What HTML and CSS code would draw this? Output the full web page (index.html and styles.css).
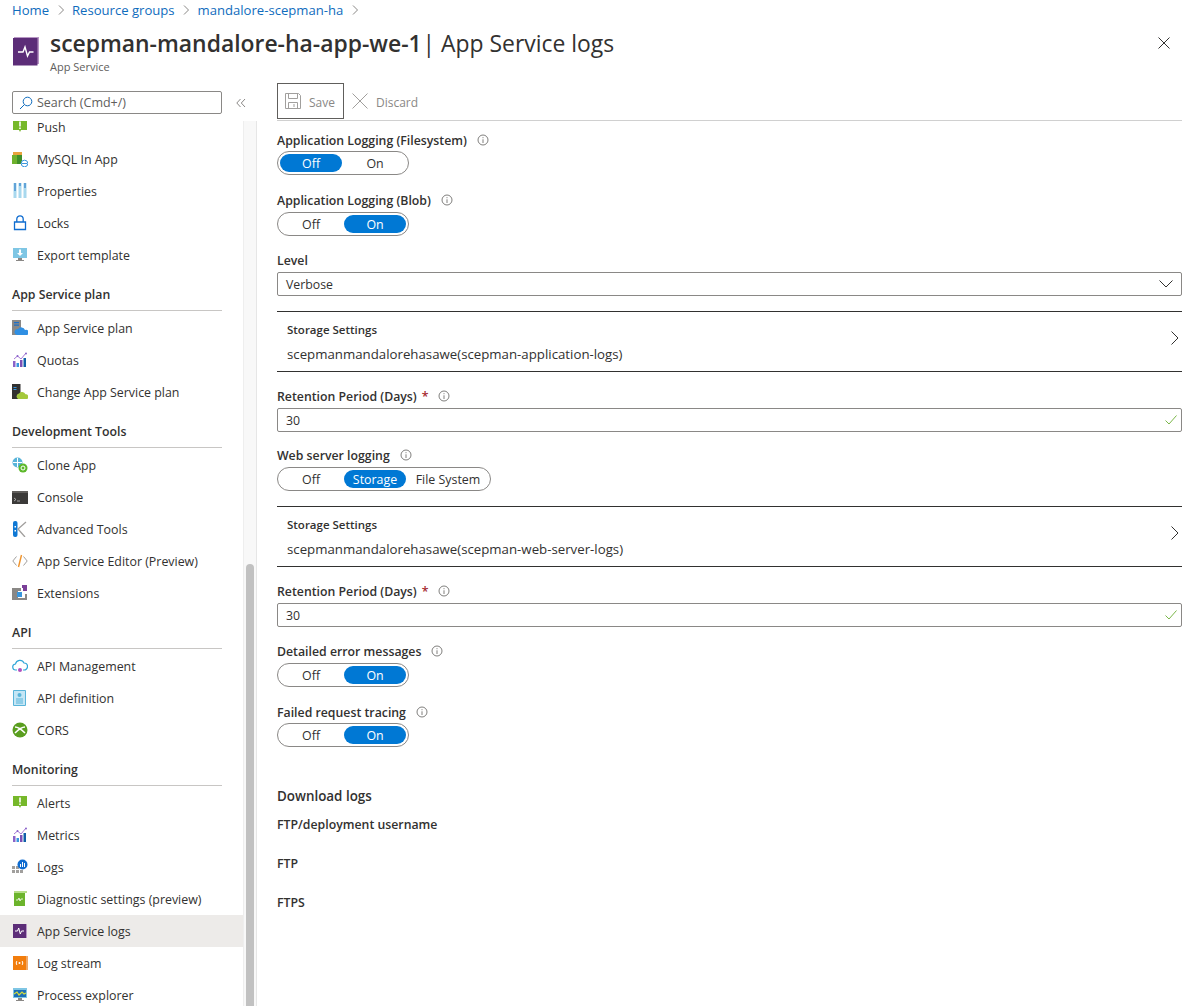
FILE: index.html
```html
<!DOCTYPE html>
<html lang="en">
<head>
<meta charset="utf-8">
<title>App Service logs</title>
<link rel="stylesheet" href="styles.css">
</head>
<body>
<nav class="crumbs"><a>Home</a><svg class="sep" viewBox="0 0 8 12"><path d="M2 1.500 6.500 6 2 10.500"/></svg><a>Resource groups</a><svg class="sep" viewBox="0 0 8 12"><path d="M2 1.500 6.500 6 2 10.500"/></svg><a>mandalore-scepman-ha</a><svg class="sep" viewBox="0 0 8 12"><path d="M2 1.500 6.500 6 2 10.500"/></svg></nav>
<header class="head">
  <svg class="head-icon" viewBox="0 0 26 29"><path fill="#b796c4" d="M1 0h25v27H1z"/><path fill="#5c2d78" d="M0 1h24.500v27.500H0z"/><path fill="none" stroke="#fff" stroke-width="1.400" d="M5 15h5l2-5 2.500 9 2-4h4"/></svg>
  <div class="head-text">
    <h1><b>scepman-mandalore-ha-app-we-1</b> | App Service logs</h1>
    <p>App Service</p>
  </div>
  <svg class="close" viewBox="0 0 12 12"><path d="M.5.500l11 11M11.500.500l-11 11"/></svg>
</header>
<div class="body-row">
  <aside class="side">
    <div class="side-top">
      <div class="search"><svg viewBox="0 0 14 14"><circle cx="8.500" cy="5.500" r="4.300"/><path d="M5.500 8.500 1 13"/></svg><span>Search (Cmd+/)</span></div>
      <svg class="collapse" viewBox="0 0 10 10"><path d="M4.500 1 .8 5l3.700 4M9 1 5.300 5 9 9"/></svg>
    </div>
    <div class="side-scroll">
      <div class="menu-wrap">
        <ul class="menu">
          <li><svg viewBox="0 0 16 16"><path fill="#76b82a" d="M1 1h14v10H9l-1 2-1-2H1z"/><path fill="#fff" d="M7.200 2.500h1.600v5H7.200zM7.200 8.500h1.600V10H7.200z"/></svg>Push</li>
          <li><svg viewBox="0 0 16 16"><path fill="#e8a33d" d="M1 1h9v4H1z"/><path fill="#6eb12d" d="M0 4h5v9H0z"/><path fill="#3f8f2a" d="M5 4h5v9H5z"/><circle cx="12.500" cy="12.500" r="3.300" fill="#fff" stroke="#3a96dd"/><path stroke="#3a96dd" d="M10 12.500h5"/></svg>MySQL In App</li>
          <li><svg viewBox="0 0 16 16"><path fill="#a8d8ee" d="M1.500 0h3v15h-3zM6.500 0h3v15h-3zM11.500 0h3v15h-3z"/><path fill="#1b6ec2" d="M2.500 0h1v8h-1zM7.500 0h1v3h-1zM12.500 0h1v5h-1z"/></svg>Properties</li>
          <li><svg viewBox="0 0 16 16"><path fill="none" stroke="#0f6cd0" stroke-width="1.300" d="M2.500 7h11v7.500h-11zM4.800 7V4a3.200 3.200 0 0 1 6.400 0v3"/></svg>Locks</li>
          <li><svg viewBox="0 0 16 16"><path fill="#7fc6e4" d="M1 1h14v10H1z"/><path fill="#8a8886" d="M6 11h4v2H6zM4 13h8v1H4z"/><path fill="#fff" d="M7 2.500h2V6h2L8 9 5 6h2z"/></svg>Export template</li>
        </ul>
        <h2 class="sec">App Service plan</h2>
        <ul class="menu">
          <li><svg viewBox="0 0 16 16"><path fill="#8a8886" d="M0 0h9v15H0z"/><path fill="#1d6fc8" d="M2 2h5v1.200H2zM2 4.500h5v1.200H2z"/><path fill="#2f8fe3" d="M5 15a3 3 0 0 1 1-6 4 4 0 0 1 7 1 2.600 2.600 0 0 1 2 5z"/></svg>App Service plan</li>
          <li><svg viewBox="0 0 16 16"><path fill="#8a63c9" d="M1 9h2.500v6H1z"/><path fill="#3a96dd" d="M4.500 11H7v4H4.500z"/><path fill="#7b4fb5" d="M8 8h2.500v7H8z"/><path fill="#0f5fa8" d="M11.500 6H14v9h-2.500z"/><path fill="none" stroke="#a678d8" d="m2 7 3.500-3 3.500 3 5-6"/><circle cx="5.500" cy="4" r="1" fill="#8a63c9"/><circle cx="14" cy="1.500" r="1" fill="#8a63c9"/></svg>Quotas</li>
          <li><svg viewBox="0 0 16 16"><path fill="#323130" d="M0 0h8.500v15H0z"/><path fill="#3a96dd" d="M1.500 3h3v1h-3zM1.500 5h3v1h-3z"/><path fill="#a4c83c" d="M6 15a3 3 0 0 1 1-5.500 3.800 3.800 0 0 1 6.500.800A2.500 2.500 0 0 1 15 15z"/></svg>Change App Service plan</li>
        </ul>
        <h2 class="sec">Development Tools</h2>
        <ul class="menu">
          <li><svg viewBox="0 0 16 16"><circle cx="5.500" cy="5.500" r="5" fill="#59b4d9"/><path stroke="#fff" fill="none" d="M1 5.500h9M5.500 1v9"/><circle cx="11" cy="11" r="4.500" fill="#5cb82a"/><circle cx="11" cy="11" r="2" fill="none" stroke="#fff"/></svg>Clone App</li>
          <li><svg viewBox="0 0 16 16"><path fill="#3b3a39" d="M0 2h16v13H0z"/><path fill="#605e5c" d="M0 2h16v2H0z"/><path fill="none" stroke="#d0d0d0" stroke-width=".7" d="m2 9 2 1.500L2 12M5 12h3"/></svg>Console</li>
          <li><svg viewBox="0 0 16 16"><rect x="1" width="4.500" height="16" rx="2" fill="#0f78d4"/><path fill="#fff" d="M2.500 5h1.500v1.500H2.500zM2.500 9h1.500v1.500H2.500z"/><path fill="none" stroke="#a19f9d" stroke-width="1.300" d="M14 1 6 8l7 8"/></svg>Advanced Tools</li>
          <li><svg viewBox="0 0 16 16"><path fill="none" stroke="#a19f9d" d="M4.500 3.500 .8 8l3.700 4.500M11.500 3.500 15.200 8l-3.700 4.500"/><path fill="none" stroke="#f0932b" stroke-width="1.400" d="M9.500 2 6.500 14"/></svg>App Service Editor (Preview)</li>
          <li><svg viewBox="0 0 16 16"><path fill="#8a8886" d="M0 3h9v3H6v7h7V9h2v6H0z"/><path fill="#3a96dd" d="M5 7h5v5H5z"/><path fill="#7b3f98" d="M10 0h5v6h-4V3h-1z"/></svg>Extensions</li>
        </ul>
        <h2 class="sec">API</h2>
        <ul class="menu">
          <li><svg viewBox="0 0 16 16"><path fill="none" stroke="#2fa6d8" stroke-width="1.200" d="M5 12H4a3 3 0 0 1-.500-6 4.500 4.500 0 0 1 8.500-1 3.500 3.500 0 0 1 0 7h-1"/><circle cx="8" cy="12" r="2" fill="#b04fbf"/></svg>API Management</li>
          <li><svg viewBox="0 0 16 16"><path fill="#c5e6f5" stroke="#59b4d9" d="M1.500.500h12v15h-12z"/><path stroke="#59b4d9" d="M4 9h7M4 11h7M4 13h7"/><circle cx="7.500" cy="5" r="2" fill="#59b4d9"/></svg>API definition</li>
          <li><svg viewBox="0 0 16 16"><circle cx="8" cy="8" r="7.500" fill="#5a9e1f"/><path fill="none" stroke="#fff" stroke-width="1.600" d="M3 5c3 0 6 2 10 6M13 5c-3 0-6 2-10 6"/></svg>CORS</li>
        </ul>
        <h2 class="sec">Monitoring</h2>
        <ul class="menu">
          <li><svg viewBox="0 0 16 16"><path fill="#76b82a" d="M1 1h14v10H9l-1 2-1-2H1z"/><path fill="#fff" d="M7.200 2.500h1.600v5H7.200zM7.200 8.500h1.600V10H7.200z"/></svg>Alerts</li>
          <li><svg viewBox="0 0 16 16"><path fill="#8a63c9" d="M1 9h2.500v6H1z"/><path fill="#3a96dd" d="M4.500 11H7v4H4.500z"/><path fill="#7b4fb5" d="M8 8h2.500v7H8z"/><path fill="#0f5fa8" d="M11.500 6H14v9h-2.500z"/><path fill="none" stroke="#a678d8" d="m2 7 3.500-3 3.500 3 5-6"/><circle cx="5.500" cy="4" r="1" fill="#8a63c9"/><circle cx="14" cy="1.500" r="1" fill="#8a63c9"/></svg>Metrics</li>
          <li><svg viewBox="0 0 16 16"><path fill="#a19f9d" d="M0 7h3v3H0zM4 7h3v3H4zM0 11h3v3H0zM4 11h3v3H4zM8 11h3v3H8z"/><circle cx="10.500" cy="5.500" r="5" fill="#0f6cd0"/><path fill="#fff" d="M8 5h1v3H8zM10 3h1v5h-1zM12 4h1v4h-1z"/></svg>Logs</li>
          <li><svg viewBox="0 0 16 16"><path fill="#b7dd8a" d="M2 0h13v2H2z"/><path fill="#6cb42c" d="M2 2h11v13H2z"/><path fill="none" stroke="#fff" stroke-width=".8" d="M4 9h2l1-2 1 3 1-2h2"/></svg>Diagnostic settings (preview)</li>
          <li class="active"><svg viewBox="0 0 16 16"><path fill="#b796c4" d="M1 1h14v14H1z"/><path fill="#5c2d78" d="M1 1h13v14H1z"/><path fill="none" stroke="#fff" d="M3 8h2.500l1.200-3 1.600 6 1.200-3H12"/></svg>App Service logs</li>
          <li><svg viewBox="0 0 16 16"><path fill="#f0a868" d="M2 1h14v14H2z"/><path fill="#f27d0c" d="M1 1h13v14H1z"/><circle cx="7.500" cy="8" r="1" fill="#fff"/><path fill="none" stroke="#fff" d="M5 6c-1 1-1 3 0 4M10 6c1 1 1 3 0 4"/></svg>Log stream</li>
          <li><svg viewBox="0 0 16 16"><path fill="#7fc6e4" d="M1 1h14v10H1z"/><path fill="#1c6fb8" d="M2 3h12v7H2z"/><path fill="#8a8886" d="M6 11h4v2H6zM4 13h8v1H4z"/><path fill="none" stroke="#d4dc3c" stroke-width="1.200" d="m2 7 3-2 2 3 3-3 2 2 2-1"/></svg>Process explorer</li>
        </ul>
      </div>
      <div class="track"><div class="thumb"></div></div>
    </div>
  </aside>
  <main class="main">
    <div class="toolbar">
      <button class="tool boxed"><svg viewBox="0 0 16 16"><path fill="none" stroke="#a19f9d" d="M.5.500h13l2 2v13H.500zM3.500.500v5h9v-5M3.500 15.500v-6h9v6M9 11v3"/></svg>Save</button>
      <button class="tool"><svg viewBox="0 0 16 16"><path fill="none" stroke="#a19f9d" d="m.5.500 15 15M15.500.500l-15 15"/></svg>Discard</button>
    </div>
    <form class="form">
      <div class="field mt-10">
        <div class="label">Application Logging (Filesystem)<svg class="info" viewBox="0 0 12 12"><circle cx="6" cy="6" r="5"/><path d="M6 5.300V9M6 3.200v1"/></svg></div>
        <div class="toggle tight"><span class="seg on">Off</span><span class="seg">On</span></div>
      </div>
      <div class="field mt-16">
        <div class="label">Application Logging (Blob)<svg class="info" viewBox="0 0 12 12"><circle cx="6" cy="6" r="5"/><path d="M6 5.300V9M6 3.200v1"/></svg></div>
        <div class="toggle"><span class="seg">Off</span><span class="seg on">On</span></div>
      </div>
      <div class="field mt-15">
        <div class="label">Level</div>
        <div class="box">Verbose<svg class="chev" viewBox="0 0 14 8"><path d="m.5.500 6.500 6.500 6.500-6.500"/></svg></div>
      </div>
      <div class="storage">
        <div><div class="st-label">Storage Settings</div><div class="st-value">scepmanmandalorehasawe(scepman-application-logs)</div></div>
        <svg class="chev-r" viewBox="0 0 8 14"><path d="m.5.500 6.500 6.500-6.500 6.500"/></svg>
      </div>
      <div class="field mt-15">
        <div class="label">Retention Period (Days)<span class="req">*</span><svg class="info" viewBox="0 0 12 12"><circle cx="6" cy="6" r="5"/><path d="M6 5.300V9M6 3.200v1"/></svg></div>
        <div class="box">30<svg class="ok" viewBox="0 0 12 10"><path d="m.5 5.500 3.500 3.500 7.500-8.500"/></svg></div>
      </div>
      <div class="field mt-14">
        <div class="label">Web server logging<svg class="info" viewBox="0 0 12 12"><circle cx="6" cy="6" r="5"/><path d="M6 5.300V9M6 3.200v1"/></svg></div>
        <div class="toggle"><span class="seg">Off</span><span class="seg on">Storage</span><span class="seg wide">File System</span></div>
      </div>
      <div class="storage">
        <div><div class="st-label">Storage Settings</div><div class="st-value">scepmanmandalorehasawe(scepman-web-server-logs)</div></div>
        <svg class="chev-r" viewBox="0 0 8 14"><path d="m.5.500 6.500 6.500-6.500 6.500"/></svg>
      </div>
      <div class="field mt-15">
        <div class="label">Retention Period (Days)<span class="req">*</span><svg class="info" viewBox="0 0 12 12"><circle cx="6" cy="6" r="5"/><path d="M6 5.300V9M6 3.200v1"/></svg></div>
        <div class="box">30<svg class="ok" viewBox="0 0 12 10"><path d="m.5 5.500 3.500 3.500 7.500-8.500"/></svg></div>
      </div>
      <div class="field mt-15">
        <div class="label">Detailed error messages<svg class="info" viewBox="0 0 12 12"><circle cx="6" cy="6" r="5"/><path d="M6 5.300V9M6 3.200v1"/></svg></div>
        <div class="toggle"><span class="seg">Off</span><span class="seg on">On</span></div>
      </div>
      <div class="field mt-16">
        <div class="label">Failed request tracing<svg class="info" viewBox="0 0 12 12"><circle cx="6" cy="6" r="5"/><path d="M6 5.300V9M6 3.200v1"/></svg></div>
        <div class="toggle tight"><span class="seg">Off</span><span class="seg on">On</span></div>
      </div>
      <h3 class="dl">Download logs</h3>
      <div class="dl-row">FTP/deployment username</div>
      <div class="dl-row">FTP</div>
      <div class="dl-row">FTPS</div>
    </form>
  </main>
</div>
</body>
</html>
```

FILE: styles.css
```css
* { box-sizing: border-box; }
html, body { height: 100%; }
body {
  margin: 0;
  height: 1006px;
  overflow: hidden;
  background: #fff;
  color: #323130;
  font-family: "Open Sans", "Liberation Sans", sans-serif;
  font-size: 12px;
}
.crumbs {
  display: flex;
  align-items: center;
  height: 20px;
  padding-left: 12px;
  color: #0f6cbd;
  font-size: 13.100px;
}
.sep { width: 8px; height: 12px; margin: 0 7.500px; }
.sep path { fill: none; stroke: #8a8886; }
.head {
  display: flex;
  height: 61px;
  padding: 9px 0 0 13px;
}
.head-icon { width: 26px; height: 29px; margin-top: 8px; }
.head-text { margin-left: 11px; flex: 1; }
h1 {
  margin: 0;
  height: 30px;
  font-size: 22.900px;
  font-weight: 400;
  line-height: 30px;
  color: #323130;
  white-space: nowrap;
}
h1 b { font-weight: 600; margin-right: -5px; }
.head-text p { margin: 0; font-size: 11px; line-height: 16px; color: #605e5c; }
.close { width: 12px; height: 12px; margin: 8px 25px 0 0; }
.close path { fill: none; stroke: #323130; }
.body-row { display: flex; height: 925px; }
.side { width: 257px; flex: none; display: flex; flex-direction: column; }
.side-top { display: flex; align-items: center; height: 40px; padding: 10px 0 7px 12px; }
.search {
  display: flex;
  align-items: center;
  width: 210px;
  height: 23px;
  border: 1px solid #8a8886;
  border-radius: 2px;
  padding-left: 6px;
  color: #605e5c;
  font-size: 12.500px;
}
.search svg { width: 14px; height: 14px; margin-right: 4px; }
.search svg * { fill: none; stroke: #0f6cbd; }
.collapse { width: 10px; height: 10px; margin-left: 14px; }
.collapse path { fill: none; stroke: #8a8886; }
.side-scroll { flex: 1; display: flex; min-height: 0; overflow: hidden; }
.menu-wrap { width: 243px; flex: none; margin-top: -10px; }
.menu { list-style: none; margin: 0; padding: 0; }
.menu li {
  display: flex;
  align-items: center;
  height: 32px;
  padding-left: 12px;
  font-size: 12.400px;
  white-space: nowrap;
}
.menu li svg { width: 16px; height: 16px; margin-right: 9px; flex: none; }
.menu li.active { background: #edebe9; }
.sec {
  margin: 0 21px 1px 12px;
  height: 40px;
  padding-top: 15px;
  border-bottom: 1px solid #c8c6c4;
  font-size: 12.300px;
  font-weight: 600;
  line-height: 18px;
  color: #323130;
}
.track { width: 14px; flex: none; background: #f8f8f8; border-left: 1px solid #eee; border-right: 1px solid #e6e6e6; padding: 443px 2px 0; }
.thumb { height: 500px; background: #c1c1c1; border-radius: 4px 4px 0 0; }
.main { flex: 1; min-width: 0; padding: 2px 13px 0 20px; }
.toolbar {
  display: flex;
  align-items: stretch;
  gap: 7px;
  height: 38px;
  border-bottom: 1px solid #d0d0d0;
  padding-bottom: 1px;
}
.tool {
  display: flex;
  align-items: center;
  border: 1px solid transparent;
  background: none;
  padding: 2px 0 0 0;
  font: inherit;
  color: #8a8886;
}
.tool.boxed { width: 67px; border-color: #605e5c; padding-left: 7px; }
.tool svg { width: 16px; height: 16px; margin-right: 8px; margin-top: -2px; }
.form { display: block; }
.label { display: flex; align-items: center; height: 18px; font-size: 12.300px; font-weight: 600; color: #323130; }
.info { width: 12px; height: 12px; margin-left: 10px; }
.info * { fill: none; stroke: #605e5c; stroke-width: .8; }
.req { color: #a4262c; margin: 0 -1px 0 5px; }
.mt-10 { margin-top: 10px; }
.mt-14 { margin-top: 14px; }
.mt-15 { margin-top: 15px; }
.mt-16 { margin-top: 16px; }
.toggle {
  display: inline-flex;
  gap: 2px;
  height: 24px;
  margin-top: 3px;
  padding: 2px;
  border: 1px solid #8a8886;
  border-radius: 12px;
  vertical-align: top;
}
.toggle.tight { margin-top: 2px; }
.seg { width: 62px; display: flex; align-items: center; justify-content: center; border-radius: 9px; font-size: 12.400px; color: #323130; }
.seg.wide { width: 80px; }
.seg.on { background: #0078d4; color: #fff; }
.box {
  display: flex;
  align-items: center;
  justify-content: space-between;
  height: 24px;
  margin-top: 3px;
  padding: 0 8px;
  border: 1px solid #8a8886;
  border-radius: 2px;
  font-size: 12.300px;
}
.chev { width: 14px; height: 8px; }
.chev path, .chev-r path { fill: none; stroke: #323130; }
.ok { width: 12px; height: 10px; margin-right: -4px; }
.ok path { fill: none; stroke: #7ab648; }
.storage {
  display: flex;
  align-items: center;
  justify-content: space-between;
  height: 61px;
  margin-top: 15px;
  padding: 2px 3px 0 10px;
  border-top: 1px solid #323130;
  border-bottom: 1px solid #323130;
}
.st-label { font-size: 11.500px; font-weight: 600; line-height: 16px; margin-bottom: 7px; }
.st-value { font-size: 13.250px; line-height: 18px; }
.chev-r { width: 8px; height: 14px; align-self: flex-start; margin-top: 17px; }
.dl { margin: 40px 0 0; font-size: 13.400px; font-weight: 600; line-height: 18px; }
.dl-row { font-size: 12.300px; font-weight: 600; height: 18px; line-height: 18px; margin-top: 11px; }
.dl-row + .dl-row { margin-top: 21px; }
```
